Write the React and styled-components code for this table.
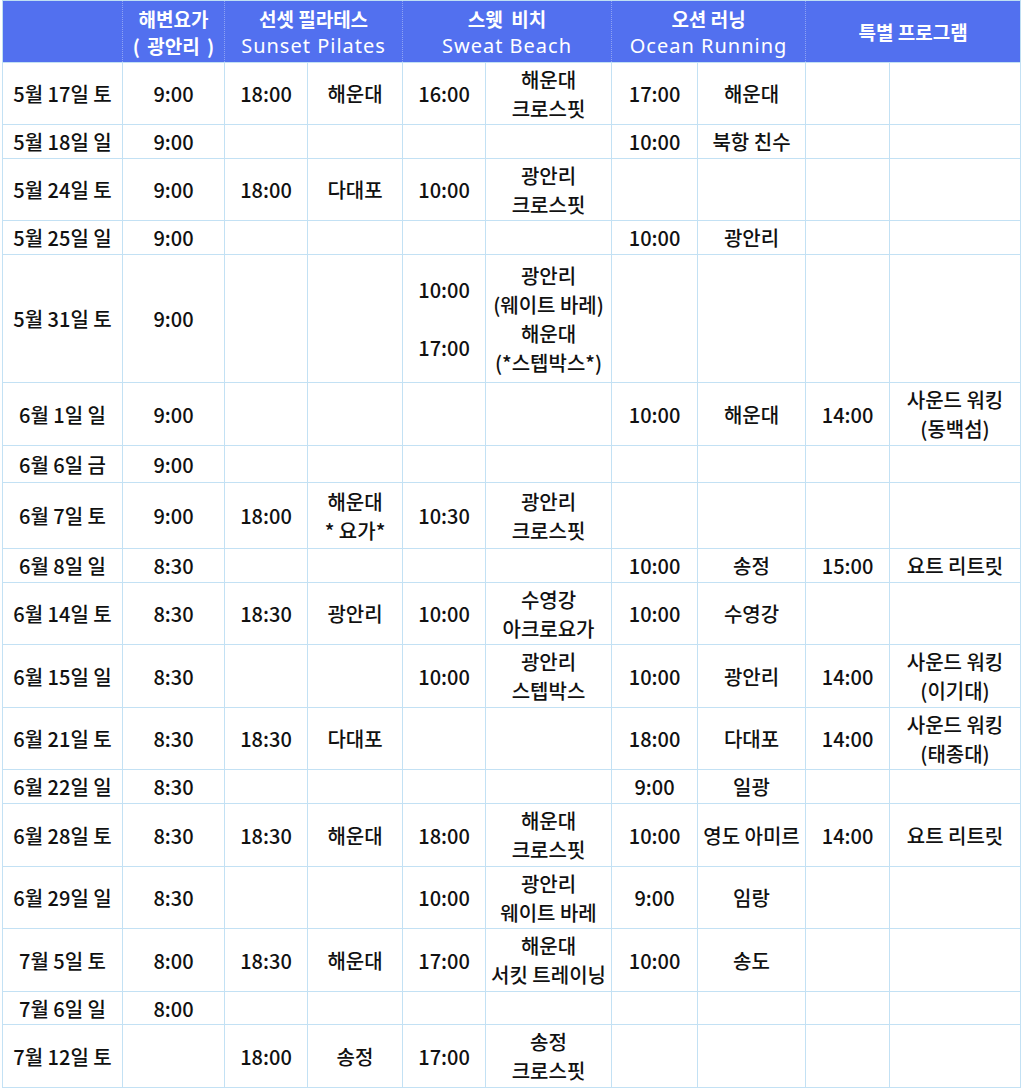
import React from 'react';
import styled, { createGlobalStyle } from 'styled-components';

const GlobalStyle = createGlobalStyle`
  html, body {
    margin: 0;
    padding: 0;
    background: #ffffff;
  }
`;

const Page = styled.div`
  padding: 0 0 0 2px;
  font-family: 'Noto Sans CJK KR', 'Noto Sans', sans-serif;
  color: #111111;
`;

const Table = styled.table`
  width: 1018px;
  border-collapse: collapse;
  table-layout: fixed;
  border: 1px solid #bfdff3;
`;

const HeadRow = styled.tr`
  height: 62px;
  background: #5270ef;
`;

const HeadCell = styled.th`
  padding: 0;
  color: #ffffff;
  line-height: 27px;
  text-align: center;
  vertical-align: middle;
  border-left: 1px dotted rgba(255, 255, 255, 0.35);
  white-space: pre;
`;

const HeadTitle = styled.div`
  font-size: 19px;
  font-weight: 700;
  word-spacing: ${({ $wide }) => ($wide ? '3px' : '0')};
`;

const HeadSub = styled.div`
  font-family: 'Noto Sans', sans-serif;
  font-size: 20px;
  font-weight: 400;
  letter-spacing: 1px;
`;

const Row = styled.tr`
  height: ${({ $h }) => $h}px;
`;

const Cell = styled.td`
  padding: 0 2px;
  font-size: 20px;
  font-weight: 500;
  line-height: 29px;
  text-align: center;
  vertical-align: middle;
  border: 1px solid #c3e1f4;
  white-space: pre-line;
`;

const columns = [120, 102, 83, 95, 83, 126, 86, 108, 84, 131];

const groups = [
  { title: '', sub: '', span: 1 },
  { title: '해변요가', sub: '( 광안리 )', span: 1, boldSub: true },
  { title: '선셋 필라테스', sub: 'Sunset Pilates', span: 2 },
  { title: '스웻  비치', sub: 'Sweat Beach', span: 2 },
  { title: '오션 러닝', sub: 'Ocean Running', span: 2 },
  { title: '특별 프로그램', sub: '', span: 2 },
];

const rows = [
  { h: 62, c: ['5월 17일 토', '9:00', '18:00', '해운대', '16:00', '해운대\n크로스핏', '17:00', '해운대', '', ''] },
  { h: 34, c: ['5월 18일 일', '9:00', '', '', '', '', '10:00', '북항 친수', '', ''] },
  { h: 62, c: ['5월 24일 토', '9:00', '18:00', '다대포', '10:00', '광안리\n크로스핏', '', '', '', ''] },
  { h: 34, c: ['5월 25일 일', '9:00', '', '', '', '', '10:00', '광안리', '', ''] },
  { h: 128, c: ['5월 31일 토', '9:00', '', '', '10:00\n\n17:00', '광안리\n(웨이트 바레)\n해운대\n(*스텝박스*)', '', '', '', ''] },
  { h: 63, c: ['6월 1일 일', '9:00', '', '', '', '', '10:00', '해운대', '14:00', '사운드 워킹\n(동백섬)'] },
  { h: 37, c: ['6월 6일 금', '9:00', '', '', '', '', '', '', '', ''] },
  { h: 66, c: ['6월 7일 토', '9:00', '18:00', '해운대\n* 요가*', '10:30', '광안리\n크로스핏', '', '', '', ''] },
  { h: 34, c: ['6월 8일 일', '8:30', '', '', '', '', '10:00', '송정', '15:00', '요트 리트릿'] },
  { h: 62, c: ['6월 14일 토', '8:30', '18:30', '광안리', '10:00', '수영강\n아크로요가', '10:00', '수영강', '', ''] },
  { h: 63, c: ['6월 15일 일', '8:30', '', '', '10:00', '광안리\n스텝박스', '10:00', '광안리', '14:00', '사운드 워킹\n(이기대)'] },
  { h: 62, c: ['6월 21일 토', '8:30', '18:30', '다대포', '', '', '18:00', '다대포', '14:00', '사운드 워킹\n(태종대)'] },
  { h: 34, c: ['6월 22일 일', '8:30', '', '', '', '', '9:00', '일광', '', ''] },
  { h: 63, c: ['6월 28일 토', '8:30', '18:30', '해운대', '18:00', '해운대\n크로스핏', '10:00', '영도 아미르', '14:00', '요트 리트릿'] },
  { h: 62, c: ['6월 29일 일', '8:30', '', '', '10:00', '광안리\n웨이트 바레', '9:00', '임랑', '', ''] },
  { h: 63, c: ['7월 5일 토', '8:00', '18:30', '해운대', '17:00', '해운대\n서킷 트레이닝', '10:00', '송도', '', ''] },
  { h: 33, c: ['7월 6일 일', '8:00', '', '', '', '', '', '', '', ''] },
  { h: 63, c: ['7월 12일 토', '', '18:00', '송정', '17:00', '송정\n크로스핏', '', '', '', ''] },
];

const App = () => (
  <Page>
    <GlobalStyle />
    <Table>
      <colgroup>
        {columns.map((w, i) => (
          <col key={i} style={{ width: w }} />
        ))}
      </colgroup>
      <thead>
        <HeadRow>
          {groups.map((g, i) => (
            <HeadCell key={i} colSpan={g.span}>
              {g.title && <HeadTitle>{g.title}</HeadTitle>}
              {g.sub &&
                (g.boldSub ? <HeadTitle $wide>{g.sub}</HeadTitle> : <HeadSub>{g.sub}</HeadSub>)}
            </HeadCell>
          ))}
        </HeadRow>
      </thead>
      <tbody>
        {rows.map((r, i) => (
          <Row key={i} $h={r.h}>
            {r.c.map((text, j) => (
              <Cell key={j}>{text}</Cell>
            ))}
          </Row>
        ))}
      </tbody>
    </Table>
  </Page>
);

export default App;
